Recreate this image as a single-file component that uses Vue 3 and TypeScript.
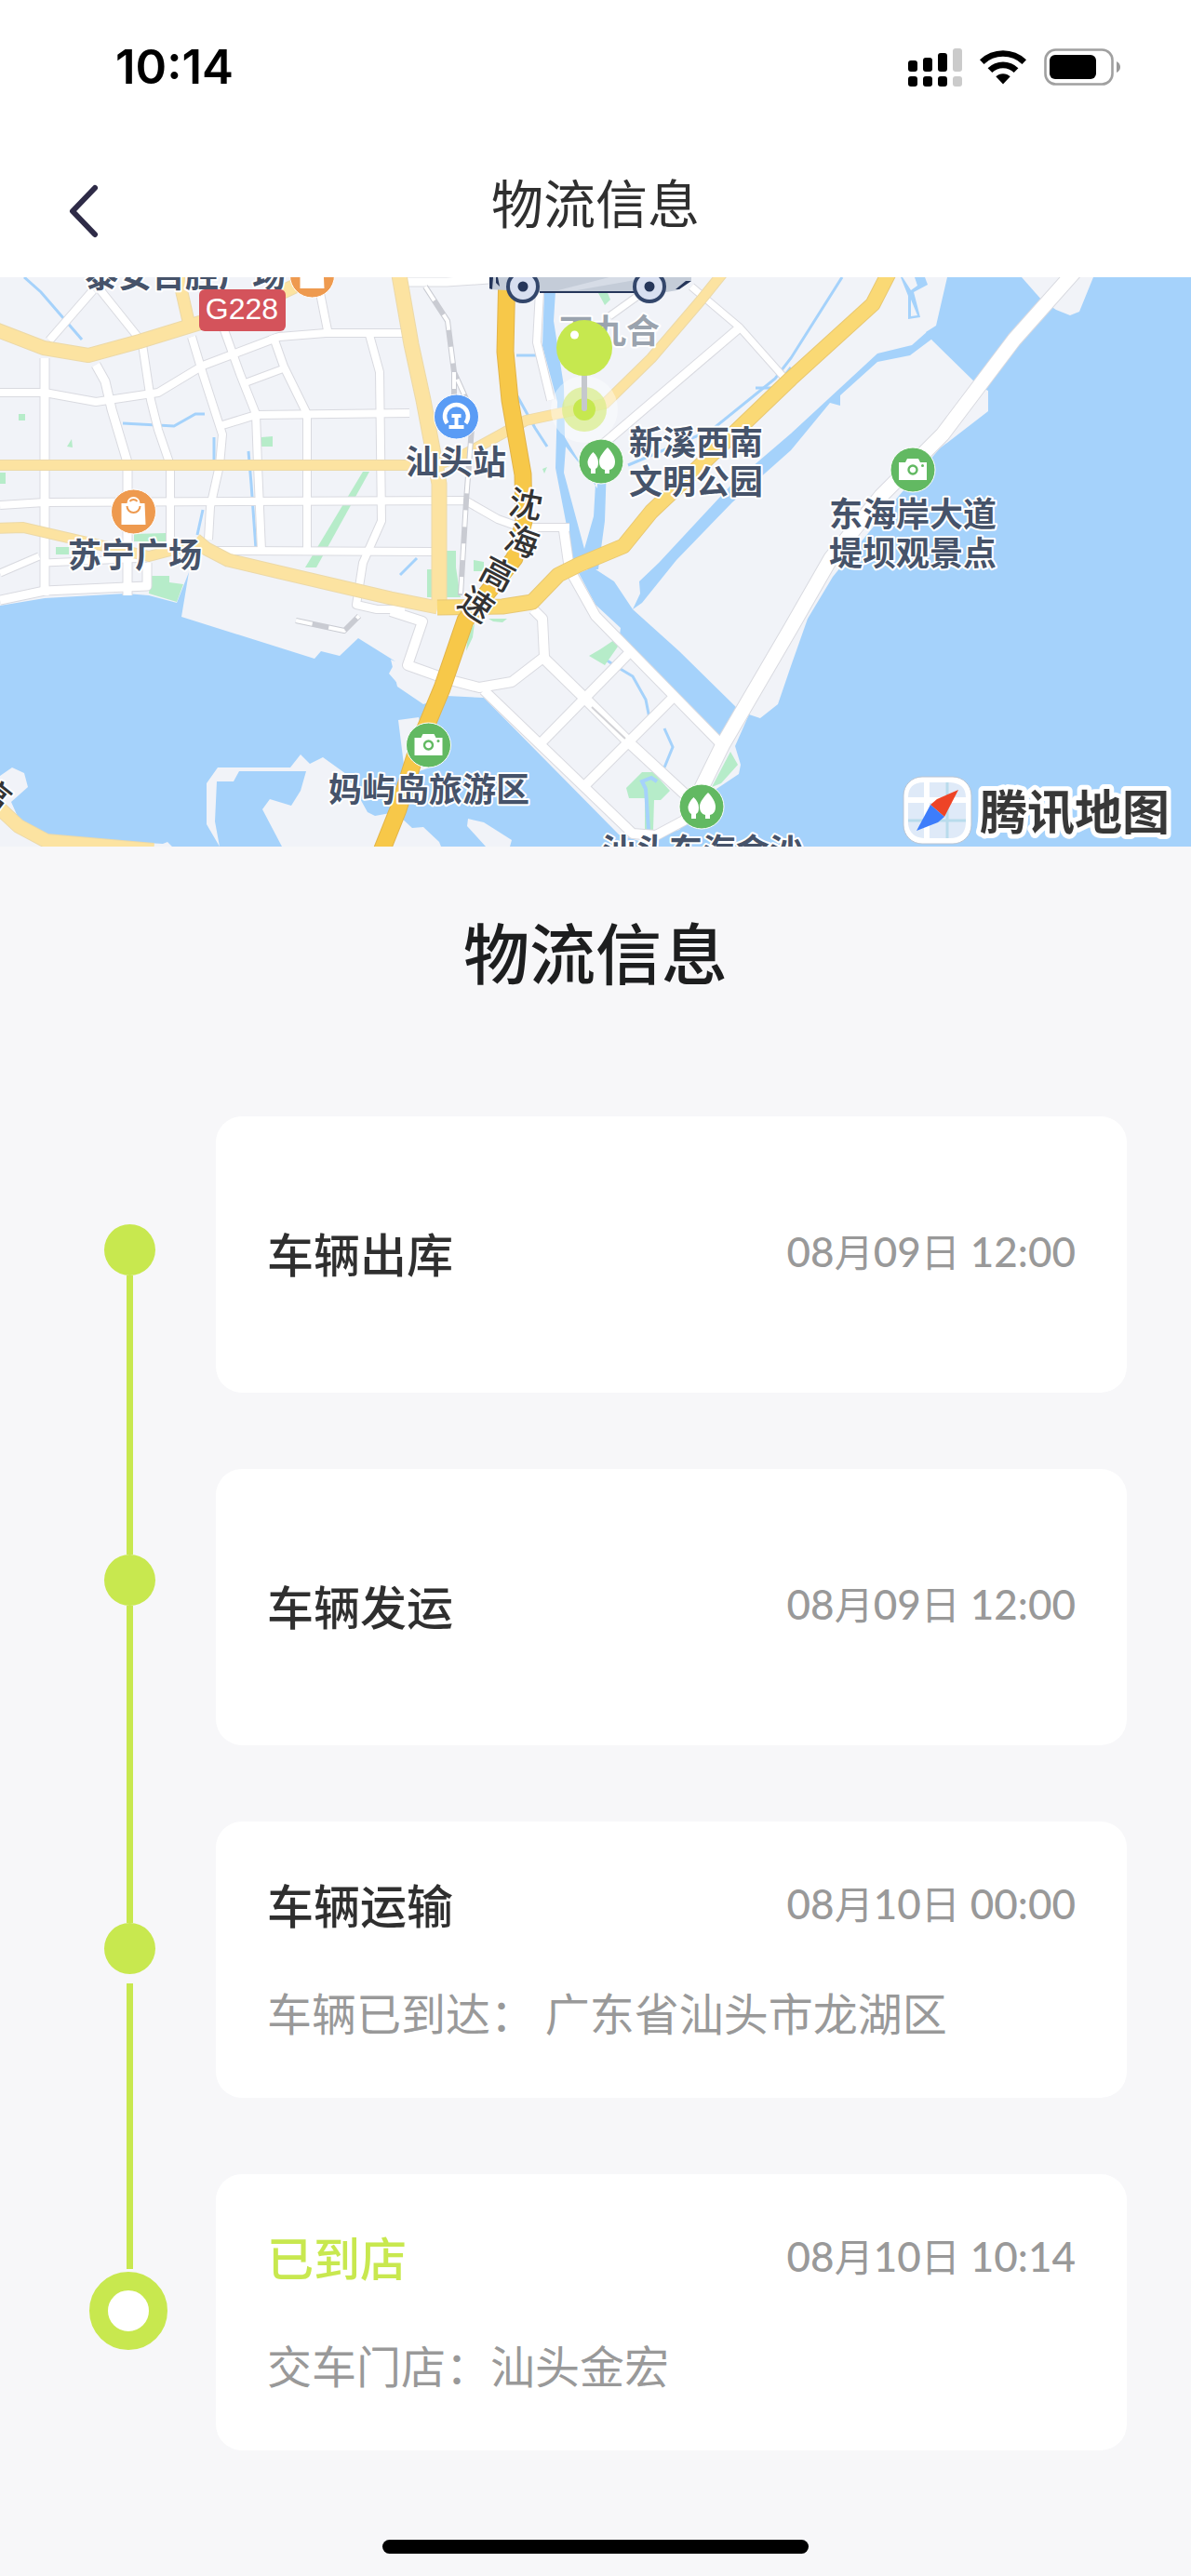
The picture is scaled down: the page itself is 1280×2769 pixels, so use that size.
<script setup lang="ts">
interface Step {
  title: string
  time: string
  detail?: string
  current?: boolean
}

interface Road {
  d: string
  w: number
  kind: 'local' | 'minor' | 'major' | 'highway'
}

interface Label {
  text: string
  x: number
  y: number
}

const steps: Step[] = [
  { title: '车辆出库', time: '08月09日 12:00' },
  { title: '车辆发运', time: '08月09日 12:00' },
  { title: '车辆运输', time: '08月10日 00:00', detail: '车辆已到达： 广东省汕头市龙湖区' },
  { title: '已到店', time: '08月10日 10:14', detail: '交车门店：汕头金宏', current: true },
]

// Digits are set heavier than the month and day characters.
const timeParts = (time: string): string[] => time.split(/(月|日)/)
const isUnit = (part: string): boolean => part === '月' || part === '日'

const land: string[] = [
  'M0 298H1018L1006 350 995 357 1002 366 1052 415 1062 420V442L1010 482 960 540 895 620 868 665 850 716 836 757 817 772 805 768 790 802 796 822 794 832 767 850 730 892 690 905 665 897 520 750 480 748 455 757 427 738 420 709 425 711 385 686 365 705 345 700 338 708 195 663 203 615 190 648 160 640 135 638 48 643 0 651Z',
  'M1098 298H1175L1160 335 1150 339 1135 333 1120 323Z',
  'M0 834 13 825 26 831 30 846 12 862 20 880 45 896 120 904 175 907 180 905 185 910H0Z',
  'M222 842 234 825H312L323 811 333 821 347 814 372 832 385 855 395 873 403 877 425 873 412 910H303L282 870 290 859 313 866 323 850 329 829H257L251 840H233L231 883 236 910 222 886Z',
  'M428 774 450 771 462 825 448 830 434 822Z',
  'M420 880 430 878 443 890 455 889 472 905 474 910H405Z',
  'M503 880 520 884 550 903 548 910H522L502 888Z',
  'M418 724 425 711 432 740Z',
]

const rivers: string[] = [
  'M585 313H597L595 345 606 415 607 470 622 495 642 525V500H652L650 560 643 612H618L597 503 599 432 583 372ZM608 480 606 508 628 590 638 555 640 520Z',
  'M622 616 637 610 660 625 680 655 730 700 793 762 776 802 720 748 665 690 667 675 640 650Z',
  'M997 356 980 371 943 380 850 466 787 520 708 605 687 625 688 638 680 655 690 648 727 602 787 540 850 484 892 433 903 436V425L943 389 978 382 1002 364Z',
  'M968 298 976 318V343L989 341 982 314 997 306 994 298H983L986 307 979 312 970 298ZM979 322 986 339 979 340Z',
]

const streams: string[] = [
  'M905 298 850 385 833 407 765 462 675 500',
  'M850 395 833 417H812',
  'M26 298 44 314 88 365',
  'M132 455 187 458 210 445H220',
  'M230 470V500',
  'M267 485 270 520 275 590',
  'M218 548 212 575',
  'M550 415 575 460 588 480',
  'M555 382H578',
  'M667 690 645 705 660 715 680 727 694 752 698 772',
  'M714 783 723 803 714 825',
  'M430 618 448 600',
]

const greens: string[] = [
  'M20 445h7v7h-7z',
  'M77 472 72 480 78 481Z',
  'M281 470 293 469V480H281Z',
  'M0 508H6V520H0Z',
  'M390 507H397L340 610H328Z',
  'M144 574 178 573V582H144Z',
  'M60 588H74V596H60Z',
  'M162 619H182V626L197 628 190 647 160 638Z',
  'M480 592H490V610L495 642H480Z',
  'M509 602 520 604V614H509Z',
  'M459 612H465V642H459Z',
  'M643 315H653L656 322 650 328Z',
  'M583 504 588 502 585 509Z',
  'M525 665H545L540 669 530 668Z',
  'M503 682 510 670 508 685 501 700Z',
  'M633 705 645 698 660 688 664 695 650 715Z',
  'M673 847 690 830 702 830 720 850 710 860H703L702 892H693V858H676Z',
  'M785 808 793 822 775 842 765 846Z',
]

const roads: Road[] = [
  { kind: 'local', w: 9, d: 'M433 303H480L525 300' },
  { kind: 'local', w: 9, d: 'M48 385V640' },
  { kind: 'local', w: 8, d: 'M0 422H48L103 432 170 422 218 393 300 362 350 358H432' },
  { kind: 'local', w: 8, d: 'M53 366 100 312' },
  { kind: 'local', w: 8, d: 'M108 312 148 362' },
  { kind: 'local', w: 9, d: 'M103 392 113 410 120 440 137 497V640' },
  { kind: 'local', w: 8, d: 'M153 370 162 430 170 462 183 500V590' },
  { kind: 'local', w: 8, d: 'M206 362 218 402 239 467 236 500 226 545 224 580' },
  { kind: 'local', w: 8, d: 'M240 352 258 402 275 445 277 500 281 592' },
  { kind: 'local', w: 8, d: 'M293 360 305 394 330 445V595' },
  { kind: 'local', w: 8, d: 'M397 360 408 400 410 560 390 605 383 650 405 655 435 655' },
  { kind: 'local', w: 8, d: 'M343 310 352 355' },
  { kind: 'local', w: 8, d: 'M236 458 275 446 440 444' },
  { kind: 'local', w: 7, d: 'M265 411 308 395' },
  { kind: 'local', w: 8, d: 'M0 543 48 540 500 538 535 558 560 567H612' },
  { kind: 'local', w: 8, d: 'M230 592 465 593' },
  { kind: 'local', w: 9, d: 'M0 645 48 635 158 630V605' },
  { kind: 'local', w: 7, d: 'M0 616 42 598' },
  { kind: 'local', w: 7, d: 'M48 605 158 600' },
  { kind: 'local', w: 8, d: 'M580 313 577 368 592 430' },
  { kind: 'local', w: 10, d: 'M606 570 612 612 640 662 780 805' },
  { kind: 'local', w: 7, d: 'M743 308 795 352 842 405' },
  { kind: 'local', w: 9, d: 'M795 352 645 480' },
  { kind: 'local', w: 7, d: 'M687 317 655 340' },
  { kind: 'local', w: 10, d: 'M420 657 454 668 438 715 480 730 515 739 550 733 585 706 583 665 573 655' },
  { kind: 'local', w: 10, d: 'M520 742 680 896 705 898 735 882 750 860' },
  { kind: 'local', w: 11, d: 'M585 708 630 752 678 800 745 862' },
  { kind: 'local', w: 10, d: 'M580 800 675 703' },
  { kind: 'local', w: 10, d: 'M627 846 723 750' },
  { kind: 'local', w: 15, d: 'M745 865 777 800 850 675 893 600 947 533 1013 467 1090 365 1155 292' },
  { kind: 'minor', w: 10, d: 'M0 500H470L500 488 540 466 565 452 650 434 700 385 753 323 778 292' },
  { kind: 'minor', w: 14, d: 'M-5 354 47 374 95 382 150 367 215 347 280 325 320 306' },
  { kind: 'minor', w: 12, d: 'M190 290 204 352' },
  { kind: 'minor', w: 10, d: 'M-5 568 25 567 90 582 160 598 210 585' },
  { kind: 'minor', w: 15, d: 'M428 290 442 370 455 430 472 520V650' },
  { kind: 'minor', w: 14, d: 'M-8 862 20 888 50 904 165 914' },
  { kind: 'minor', w: 13, d: 'M210 580 222 590 245 602 300 615 420 643 470 653' },
  { kind: 'major', w: 15, d: 'M470 653 540 652 572 647 600 618 622 607 670 587 700 550 753 500 850 407 938 327 957 290' },
  { kind: 'highway', w: 17, d: 'M545 290 543 378 548 430 562 510 563 560 553 600 500 667 475 740 450 800 428 870 410 915' },
]

const labels: Label[] = [
  { text: '泰安百胜广场', x: 199, y: 309 },
  { text: '汕头站', x: 490, y: 510 },
  { text: '苏宁广场', x: 145, y: 610 },
  { text: '新溪西南', x: 748, y: 489 },
  { text: '文明公园', x: 748, y: 531 },
  { text: '东海岸大道', x: 981, y: 566 },
  { text: '堤坝观景点', x: 981, y: 608 },
  { text: '妈屿岛旅游区', x: 461, y: 862 },
  { text: '汕头东海金沙', x: 755, y: 928 },
]

const highwayName = [
  { ch: '沈', x: 565, y: 542, r: 10 },
  { ch: '海', x: 561, y: 582, r: 20 },
  { ch: '高', x: 535, y: 617, r: 28 },
  { ch: '速', x: 512, y: 650, r: 34 },
  { ch: '高', x: -7, y: 854, r: 38 },
]

const cameras = [
  { x: 981, y: 505 },
  { x: 460.5, y: 801 },
]
const parks = [
  { x: 646, y: 496 },
  { x: 754, y: 867 },
]
const shops = [
  { x: 143.5, y: 550 },
  { x: 335.5, y: 296 },
]
</script>

<template>
  <div class="screen">
    <header class="top">
      <div class="status">
        <span class="clock">10:14</span>
        <div class="indicators">
          <svg width="58" height="42" viewBox="0 0 58 42" aria-hidden="true">
            <rect x="0" y="14" width="10" height="12" rx="3" />
            <rect x="16" y="11" width="10" height="15" rx="3" />
            <rect x="32" y="6" width="10" height="20" rx="3" />
            <rect x="48" y="1" width="10" height="25" rx="3" fill="#cbcbcb" />
            <rect x="0" y="31" width="10" height="11" rx="3" />
            <rect x="16" y="31" width="10" height="11" rx="3" />
            <rect x="32" y="31" width="10" height="11" rx="3" />
            <rect x="48" y="31" width="10" height="11" rx="3" fill="#cbcbcb" />
          </svg>
          <svg width="50" height="38" viewBox="0 0 50 38" aria-hidden="true">
            <path d="M0 11.300A36 36 0 0 1 50 11.300L45.500 16A29.500 29.500 0 0 0 4.500 16Z" />
            <path d="M8.600 20.200A23.500 23.500 0 0 1 41.400 20.200L36.700 25A17 17 0 0 0 13.300 25Z" />
            <path d="M17.300 29.300A11 11 0 0 1 32.700 29.300L25 37.500Z" />
          </svg>
          <svg width="82" height="40" viewBox="0 0 82 40" aria-hidden="true">
            <rect x="1.500" y="1.500" width="72" height="37" rx="11" fill="none" stroke="#a0a0a0" stroke-width="2.600" />
            <rect x="6" y="7" width="50" height="26" rx="6" />
            <path d="M78 14Q82 16 82 20T78 26Z" fill="#9a9a9a" />
          </svg>
        </div>
      </div>
      <nav class="nav">
        <button class="back" type="button" aria-label="返回">
          <svg width="36" height="58" viewBox="0 0 36 58" aria-hidden="true">
            <path d="M30 4 6 29 30 54" fill="none" stroke="#2e2b47" stroke-width="6" stroke-linecap="round" stroke-linejoin="round" />
          </svg>
        </button>
        <h1 class="nav-title">物流信息</h1>
        <span></span>
      </nav>
    </header>

    <svg class="map" viewBox="0 298 1280 612" preserveAspectRatio="xMidYMid slice" role="img" aria-label="地图">
      <rect y="298" width="1280" height="612" fill="#a5d2fb" />
      <path v-for="d in land" :key="d" :d="d" fill="#f1f3f8" />
      <path v-for="d in rivers" :key="d" :d="d" fill="#a5d2fb" fill-rule="evenodd" />
      <path v-for="d in streams" :key="d" :d="d" fill="none" stroke="#a5d2fb" stroke-width="3" />
      <path v-for="d in greens" :key="d" :d="d" fill="#b6ecc9" />
      <path d="M697 892 694 848 690 840 700 836 706 840" fill="none" stroke="#a5d2fb" stroke-width="4" />

      <g fill="none" stroke-linejoin="round">
        <g v-for="kind in ['local', 'minor', 'major', 'highway']" :key="kind">
          <path v-for="r in roads.filter((road) => road.kind === kind)" :key="r.d" :d="r.d" :class="'edge-' + kind" :stroke-width="r.w + 2" />
          <path v-for="r in roads.filter((road) => road.kind === kind)" :key="r.d + 'f'" :d="r.d" :class="'fill-' + kind" :stroke-width="r.w" />
        </g>
        <path d="M636 760 672 794" stroke="#d2d2d6" stroke-width="2" />
        <g stroke-width="6" stroke="#c9cbd2">
          <path d="M457 308 481 345 488 400 506 440 507 460 501 538 495 640M488 400V425M318 667 370 678 386 662" />
          <path d="M457 308 481 345 488 400 506 440 507 460 501 538 495 640M488 400V425M318 667 370 678 386 662" stroke="#fff" stroke-width="4" stroke-dasharray="18 18" />
        </g>
      </g>

      <g v-for="s in shops" :key="s.x" :transform="`translate(${s.x} ${s.y})`">
        <circle r="24" fill="#ee9a4f" stroke="#fff" stroke-width="1" />
        <path d="M-13-9H-7A7 7 0 0 1 7-9H12L13 14H-13Z" fill="#fff" />
        <path d="M-7-6A7 7 0 0 0 7-6M-4-11A5 5 0 0 1 4-11" fill="none" stroke="#ee9a4f" stroke-width="2" />
      </g>

      <g transform="translate(490.500 448)">
        <circle r="24" fill="#5a9cf5" stroke="#fff" stroke-width="1" />
        <path d="M-10 7A12.500 12.500 0 1 1 10 7" fill="none" stroke="#fff" stroke-width="4.500" />
        <path d="M-5-3H5V1H2V9H8V13H-8V9H-2V1H-5Z" fill="#fff" />
      </g>

      <g v-for="p in parks" :key="p.x" :transform="`translate(${p.x} ${p.y})`">
        <circle r="24" fill="#62b962" stroke="#fff" stroke-width="1" />
        <path d="M-8.500-10C-5-7-3-3-3 1S-4 7-6 8V13H-11V8C-13 7-14.500 4-14.500 1S-12-7-8.500-10ZM7-15C11-11 15-5 15 0S13 8 9 9V13H4V9C0 8-2 5-2 0S3-11 7-15Z" fill="#fff" />
      </g>

      <g v-for="c in cameras" :key="c.x" :transform="`translate(${c.x} ${c.y})`">
        <circle r="24" fill="#62b962" stroke="#fff" stroke-width="1" />
        <path d="M-15-8H-8L-6-12H6L8-8H15V11H-15Z" fill="#fff" />
        <circle r="4.500" fill="none" stroke="#62b962" stroke-width="2.400" />
        <circle cx="10.500" cy="-4.500" r="1.500" fill="#62b962" />
      </g>

      <text class="place faded" x="655" y="369">下九合</text>
      <text v-for="l in labels" :key="l.text" class="place" :x="l.x" :y="l.y">{{ l.text }}</text>
      <text v-for="h in highwayName" :key="h.x" class="place road-name" :transform="`translate(${h.x} ${h.y}) rotate(${h.r})`" y="13">{{ h.ch }}</text>

      <rect x="214" y="311" width="93" height="45" rx="6" fill="#d4535b" />
      <text class="shield" x="260" y="343">G228</text>

      <g>
        <path d="M526 298H743V302L728 312 716 314H580L526 311Z" fill="#c4ccd8" />
        <path d="M600 312 655 298H700L620 312Z" fill="#d6dce6" />
        <path d="M526 298H530L529 311 526 310ZM533 298H535L537 308 533 304ZM743 302 730 311H726L737 302ZM580 313H682V315H580Z" fill="#26365a" />
        <g v-for="x in [562, 698]" :key="x" :transform="`translate(${x} 308)`">
          <circle r="18" fill="#33466b" />
          <circle r="14" fill="#d8dff0" />
          <circle r="5.500" fill="#26365a" />
        </g>
      </g>

      <g>
        <circle cx="628" cy="440" r="36" fill="#fff" opacity="0.4" />
        <circle cx="628" cy="440" r="24" fill="#d9ec86" opacity="0.7" />
        <circle cx="628" cy="440" r="12" fill="#c6e84f" />
        <path d="M628 400V439" stroke="#c5c8cd" stroke-width="6" stroke-linecap="round" />
        <circle cx="628" cy="374" r="30" fill="#c6e84f" />
        <circle cx="617.500" cy="360" r="4.500" fill="#fff" />
      </g>

      <g>
        <rect x="971" y="835" width="73" height="72" rx="20" fill="#fff" stroke="#b9c4d2" stroke-width="1" />
        <path d="M976 857Q976 841 993 841V857ZM999 841H1021Q1038 842 1038 857H999ZM976 863H993V901Q978 900 976 886ZM999 863H1038V885Q1037 901 1021 901H999Z" fill="#dfeaf8" />
        <path d="M976 882H1038M1018 841V901" stroke="#b9dcec" stroke-width="3" />
        <path d="M1030 849 1015 878 1000 865 1007 859Z" fill="#ee4426" />
        <path d="M985 893 1000 865 1015 878 1008 884Z" fill="#3d7dfb" />
        <text class="brand" x="1155" y="892">腾讯地图</text>
      </g>
    </svg>

    <main class="content">
      <h2 class="heading">物流信息</h2>
      <div class="timeline">
        <div class="rail" aria-hidden="true">
          <i class="dot"></i>
          <i class="line first"></i>
          <i class="dot"></i>
          <i class="line second"></i>
          <i class="dot"></i>
          <i class="line third"></i>
          <i class="ring"></i>
        </div>
        <ol class="cards">
          <li v-for="s in steps" :key="s.title" class="card">
            <div class="row">
              <h3 class="title" :class="{ current: s.current }">{{ s.title }}</h3>
              <time class="time"><span v-for="(part, i) in timeParts(s.time)" :key="i" :class="{ unit: isUnit(part) }">{{ part }}</span></time>
            </div>
            <p v-if="s.detail" class="detail">{{ s.detail }}</p>
          </li>
        </ol>
      </div>
    </main>
    <footer class="home">
      <div class="home-bar"></div>
    </footer>
  </div>
</template>

<style>
body {
  background: #f7f7f9;
}
</style>

<style scoped>
.screen {
  font-family: "Noto Sans CJK SC", sans-serif;
  color: #2f2f2f;
  background: #f7f7f9;
}

h1,
h2,
h3,
p,
ol {
  margin: 0;
  padding: 0;
  font-weight: 400;
}

.top {
  background: #fff;
}

.status {
  display: flex;
  align-items: center;
  justify-content: space-between;
  height: 144px;
  padding: 0 76px 0 124px;
}

.clock {
  font-family: Inter, sans-serif;
  font-size: 51px;
  font-weight: 600;
  line-height: 60px;
  color: #000;
}

.indicators {
  display: flex;
  align-items: center;
  gap: 19px;
}

.nav {
  display: grid;
  grid-template-columns: 1fr auto 1fr;
  align-items: center;
  height: 154px;
  padding: 0 72px;
}

.back {
  display: flex;
  justify-self: start;
  padding: 12px 0 0;
  border: 0;
  background: none;
}

.nav-title {
  padding-bottom: 10px;
  font-size: 56px;
  line-height: 80px;
}

.map {
  display: block;
  width: 100%;
  height: 612px;
}

.edge-local { stroke: #d9dae0; }
.fill-local { stroke: #fff; }
.edge-minor { stroke: #ecd9a8; }
.fill-minor { stroke: #fce3a1; }
.edge-major { stroke: #e8c873; }
.fill-major { stroke: #fad975; }
.edge-highway { stroke: #e2b44a; }
.fill-highway { stroke: #f7c849; }

.place {
  font-size: 36px;
  font-weight: 600;
  text-anchor: middle;
  fill: #46536a;
  stroke: #fff;
  stroke-width: 4px;
  stroke-linejoin: round;
  paint-order: stroke;
}

.faded {
  fill: #9aa3ae;
}

.road-name {
  font-weight: 500;
  fill: #333;
}

.shield {
  font-family: "Liberation Sans", sans-serif;
  font-size: 32px;
  text-anchor: middle;
  fill: #fff;
}

.brand {
  font-size: 51px;
  font-weight: 700;
  text-anchor: middle;
  fill: #383838;
  stroke: #fff;
  stroke-width: 10px;
  stroke-linejoin: round;
  paint-order: stroke;
}

.content {
  padding: 61px 69px 0 0;
}

.heading {
  padding: 0 0 129px 69px;
  font-size: 71px;
  font-weight: 500;
  line-height: 100px;
  text-align: center;
  color: #1d1e1f;
}

.timeline {
  display: flex;
}

.rail {
  display: flex;
  flex: 0 0 232px;
  flex-direction: column;
  align-items: center;
  box-sizing: border-box;
  padding: 116px 0 108px 47px;
}

.dot {
  flex: none;
  width: 55px;
  height: 55px;
  border-radius: 50%;
  background: #c8e84f;
}

.line {
  width: 7px;
  background: #c8e84f;
}

.first { flex: 300 0 0; }
.second { flex: 341 0 0; }
.third {
  flex: 307 0 0;
  margin: 10px 0 3px;
}

.ring {
  flex: none;
  box-sizing: border-box;
  width: 84px;
  height: 84px;
  margin-right: 4px;
  border: 20px solid #c8e84f;
  border-radius: 50%;
  background: #fff;
}

.cards {
  display: flex;
  flex: 1;
  flex-direction: column;
  gap: 82px;
  list-style: none;
}

.card {
  display: flex;
  flex-direction: column;
  justify-content: center;
  gap: 55px;
  box-sizing: border-box;
  min-height: 297px;
  padding: 0 55px 6px;
  border-radius: 28px;
  background: #fff;
}

.row {
  display: flex;
  align-items: center;
  justify-content: space-between;
}

.title {
  font-size: 50px;
  font-weight: 500;
  line-height: 60px;
}

.current {
  color: #c8e84f;
}

.time {
  font-family: Lato, "Noto Sans CJK SC", sans-serif;
  font-size: 44px;
  font-weight: 500;
  line-height: 60px;
  color: #999;
}

.unit {
  font-size: 42px;
  font-weight: 400;
}

.detail {
  font-size: 48px;
  line-height: 60px;
  color: #999;
}

.home {
  display: flex;
  justify-content: center;
  padding: 96px 0 24px;
}

.home-bar {
  width: 458px;
  height: 15px;
  border-radius: 8px;
  background: #000;
}
</style>
